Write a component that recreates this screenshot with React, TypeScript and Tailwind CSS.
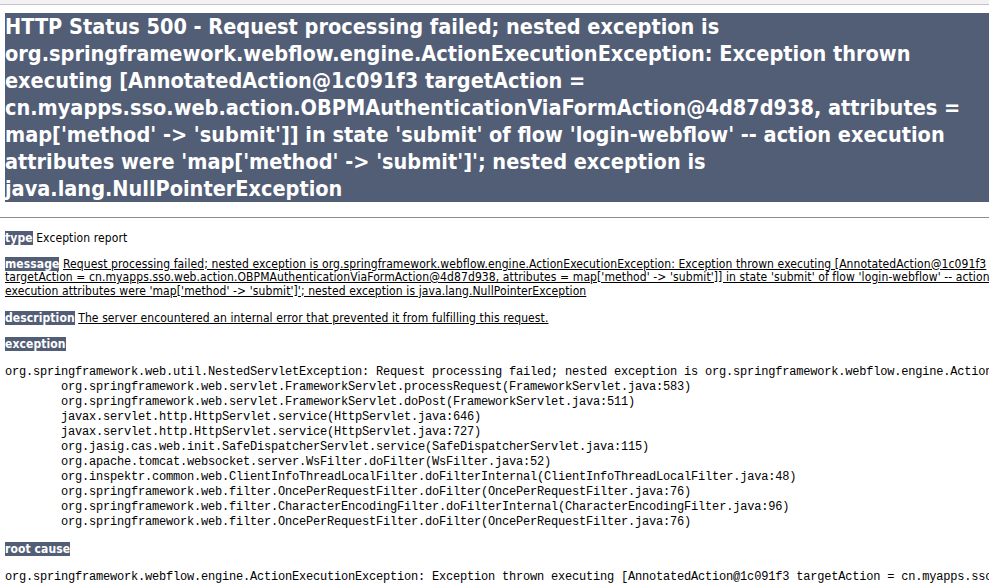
import React from "react";

const h1Lines = [
  "HTTP Status 500 - Request processing failed; nested exception is",
  "org.springframework.webflow.engine.ActionExecutionException: Exception thrown",
  "executing [AnnotatedAction@1c091f3 targetAction =",
  "cn.myapps.sso.web.action.OBPMAuthenticationViaFormAction@4d87d938, attributes =",
  "map['method' -> 'submit']] in state 'submit' of flow 'login-webflow' -- action execution",
  "attributes were 'map['method' -> 'submit']'; nested exception is",
  "java.lang.NullPointerException",
];

const msgLines = [
  "Request processing failed; nested exception is org.springframework.webflow.engine.ActionExecutionException: Exception thrown executing [AnnotatedAction@1c091f3",
  "targetAction = cn.myapps.sso.web.action.OBPMAuthenticationViaFormAction@4d87d938, attributes = map['method' -> 'submit']] in state 'submit' of flow 'login-webflow' -- action",
  "execution attributes were 'map['method' -> 'submit']'; nested exception is java.lang.NullPointerException",
];

const stack = `org.springframework.web.util.NestedServletException: Request processing failed; nested exception is org.springframework.webflow.engine.ActionExecutionException: Exception thrown executing [AnnotatedAction@1c091f3 targetAction = cn.myapps.sso.web.action.OBPMAuthenticationViaFormAction@4d87d938
\torg.springframework.web.servlet.FrameworkServlet.processRequest(FrameworkServlet.java:583)
\torg.springframework.web.servlet.FrameworkServlet.doPost(FrameworkServlet.java:511)
\tjavax.servlet.http.HttpServlet.service(HttpServlet.java:646)
\tjavax.servlet.http.HttpServlet.service(HttpServlet.java:727)
\torg.jasig.cas.web.init.SafeDispatcherServlet.service(SafeDispatcherServlet.java:115)
\torg.apache.tomcat.websocket.server.WsFilter.doFilter(WsFilter.java:52)
\torg.inspektr.common.web.ClientInfoThreadLocalFilter.doFilterInternal(ClientInfoThreadLocalFilter.java:48)
\torg.springframework.web.filter.OncePerRequestFilter.doFilter(OncePerRequestFilter.java:76)
\torg.springframework.web.filter.CharacterEncodingFilter.doFilterInternal(CharacterEncodingFilter.java:96)
\torg.springframework.web.filter.OncePerRequestFilter.doFilter(OncePerRequestFilter.java:76)`;

const rootCause = `org.springframework.webflow.engine.ActionExecutionException: Exception thrown executing [AnnotatedAction@1c091f3 targetAction = cn.myapps.sso.web.action.OBPMAuthenticationViaFormAction@4d87d938, attributes = map['method' -> 'submit']]`;

function Label({ children }: { children: React.ReactNode }) {
  return <b className="bg-[#525D76] text-white font-bold">{children}</b>;
}

const sans = '"DejaVu Sans Condensed", "DejaVu Sans", Tahoma, sans-serif';
const mono = '"Liberation Mono", "Courier New", monospace';

export default function App() {
  return (
    <div className="w-[989px] h-[583px] overflow-hidden bg-white text-black">
      <div className="h-[4px] bg-[#f3f1f3]" />
      <div className="h-px bg-[#c4c4c4]" />
      <div className="w-[1200px] pl-[5px] pt-[8px]" style={{ fontFamily: sans }}>
        <h1 className="bg-[#525D76] text-white font-bold text-[21.5px] leading-[27px] whitespace-nowrap">
          {h1Lines.map((l, i) => (
            <div key={i}>{l}</div>
          ))}
        </h1>
        <div className="mt-[15px] h-px bg-[#8c8c8c] w-[1200px] -ml-[5px]" />
        <div className="text-[12px] leading-[13.5px] tracking-[0.1px]">
          <p className="mt-[14px] whitespace-nowrap">
            <Label>type</Label> Exception report
          </p>
          <p className="mt-[12px] whitespace-nowrap">
            <Label>message</Label>{" "}
            <u>
              {msgLines.map((l, i) => (
                <React.Fragment key={i}>
                  {l}
                  {i < msgLines.length - 1 && <br />}
                </React.Fragment>
              ))}
            </u>
          </p>
          <p className="mt-[14px] whitespace-nowrap">
            <Label>description</Label>{" "}
            <u>
              The server encountered an internal error that prevented it from
              fulfilling this request.
            </u>
          </p>
          <p className="mt-[12px]">
            <Label>exception</Label>
          </p>
          <pre
            className="mt-[14px] text-[12px] leading-[15px] tracking-[-0.2px] whitespace-pre"
            style={{ fontFamily: mono, tabSize: 8 }}
          >
            {stack}
          </pre>
          <p className="mt-[13px]">
            <Label>root cause</Label>
          </p>
          <pre
            className="mt-[13px] text-[12px] leading-[15px] tracking-[-0.2px] whitespace-pre"
            style={{ fontFamily: mono, tabSize: 8 }}
          >
            {rootCause}
          </pre>
        </div>
      </div>
    </div>
  );
}
